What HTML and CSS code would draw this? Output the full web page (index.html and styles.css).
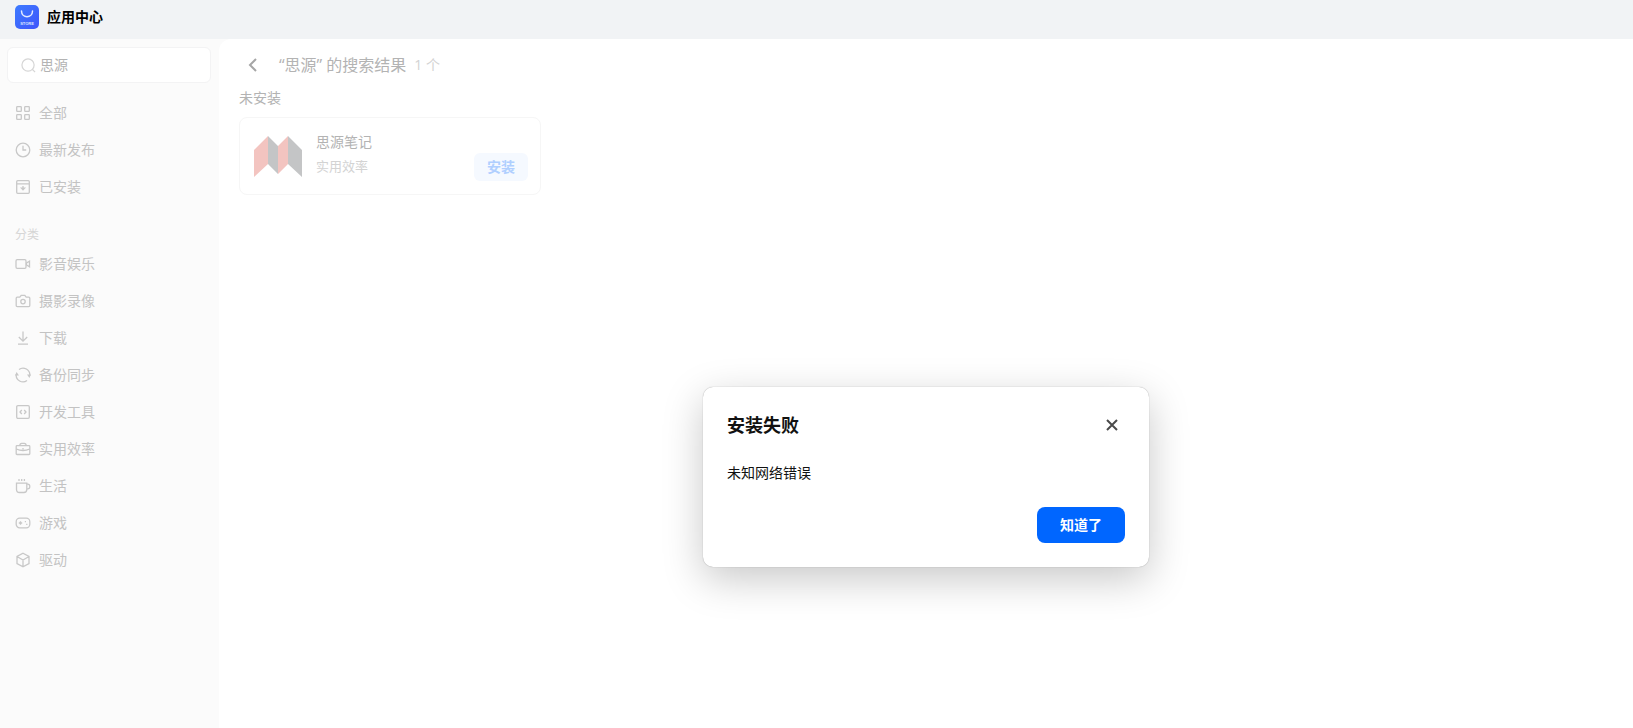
FILE: index.html
```
<!DOCTYPE html>
<html lang="zh-CN">
<head>
    <meta charset="UTF-8">
    <meta name="viewport" content="width=device-width, initial-scale=1.0">
    <title>应用中心</title>
    <link rel="stylesheet" href="styles.css">
</head>
<body>
    <header class="topbar">
        <svg class="logo" viewBox="0 0 24 24">
            <defs>
                <linearGradient id="logo-bg" x1="0" y1="0" x2="1" y2="1">
                    <stop offset="0" stop-color="#3d7bff"/>
                    <stop offset="1" stop-color="#3f55fb"/>
                </linearGradient>
            </defs>
            <rect width="24" height="24" rx="5" fill="url(#logo-bg)"/>
            <path d="M6.5 6c0 7.5 11 7.5 11 0" fill="none" stroke="#e4eaff" stroke-width="1.5" stroke-linecap="round"/>
            <text x="12" y="19.6" text-anchor="middle" class="logo-text">STORE</text>
        </svg>
        <h1>应用中心</h1>
    </header>

    <div class="layout">
        <aside class="sidebar">
            <label class="search">
                <svg class="search-icon" viewBox="0 0 16 16"><circle cx="7.5" cy="7.5" r="6.5"/><path d="M12 12l3 3"/></svg>
                <input type="text" value="思源" aria-label="搜索">
            </label>

            <nav class="menu">
                <a href="#"><svg viewBox="0 0 16 16"><rect x="1.7" y="1.7" width="4.6" height="4.6" rx="0.6"/><rect x="9.7" y="1.7" width="4.6" height="4.6" rx="0.6"/><rect x="1.7" y="9.7" width="4.6" height="4.6" rx="0.6"/><rect x="9.7" y="9.7" width="4.6" height="4.6" rx="0.6"/></svg>全部</a>
                <a href="#"><svg viewBox="0 0 16 16"><circle cx="8" cy="8" r="6.8"/><path d="M8 3.8V8h3.2"/></svg>最新发布</a>
                <a href="#"><svg viewBox="0 0 16 16"><rect x="1.7" y="1.7" width="12.6" height="12.6" rx="1"/><path d="M1.7 4.8h12.6M8 7v3"/><path class="solid" d="M5 8.6h6L8 11.800z"/></svg>已安装</a>
            </nav>

            <h2 class="menu-title">分类</h2>
            <nav class="menu">
                <a href="#"><svg viewBox="0 0 16 16"><rect x="1" y="3.7" width="10" height="8.6" rx="1.2"/><path d="M11.500 7l3-1.800v5.600l-3-1.800z"/></svg>影音娱乐</a>
                <a href="#"><svg viewBox="0 0 16 16"><path d="M2.2 4.2h2.6l1.4-1.8h3.6l1.4 1.8h2.6q1 0 1 1v7.4q0 1-1 1H2.2q-1 0-1-1V5.2q0-1 1-1z"/><circle cx="8" cy="8.6" r="2.2"/></svg>摄影录像</a>
                <a href="#"><svg viewBox="0 0 16 16"><path d="M8 1.5V11M3.8 7L8 11.200 12.200 7M3 14.200h10"/></svg>下载</a>
                <a href="#"><svg viewBox="0 0 16 16"><path d="M4 2.500A6.800 6.800 0 0 1 14.800 8.600M12 13.500A6.800 6.800 0 0 1 1.200 7.400"/><path class="solid" d="M12 7.600h4l-1.600 3.400zM0 8.400h4L1.600 5z"/></svg>备份同步</a>
                <a href="#"><svg viewBox="0 0 16 16"><rect x="1.7" y="1.7" width="12.6" height="12.6" rx="1.2"/><path d="M6.8 6L5 8l1.8 2M9.2 6L11 8l-1.800 2"/></svg>开发工具</a>
                <a href="#"><svg viewBox="0 0 16 16"><rect x="1.2" y="4.7" width="13.6" height="8.8" rx="0.8"/><path d="M4.8 4.7q0-2.300 2-2.300h2.400q2 0 2 2.300M1.200 8q6.800 3 13.600 0M8 7v1.500"/></svg>实用效率</a>
                <a href="#"><svg viewBox="0 0 16 16"><path d="M1.5 5.2h10.300v6.300q0 3-3 3H4.500q-3 0-3-3zM11.800 6.200h1q2 0 2 2.300t-2 2.300h-1M4 1v2M6.700 1v2M9.400 1v2"/></svg>生活</a>
                <a href="#"><svg viewBox="0 0 16 16"><rect x="1.2" y="3.2" width="13.6" height="9.6" rx="3.5"/><path d="M3.800 8h3.400M5.500 6.300v3.400M9.800 6.600h1.200M11.200 9.400h1.200"/></svg>游戏</a>
                <a href="#"><svg viewBox="0 0 16 16"><path d="M8 1.200l6 3.300v7L8 14.800l-6-3.300v-7zM2 4.500l6 3.500 6-3.500M8 8v6.800"/></svg>驱动</a>
            </nav>
        </aside>

        <main class="content">
            <div class="result-head">
                <button class="back" type="button" aria-label="返回">
                    <svg viewBox="0 0 16 16"><path d="M11 2L5 8l6 6"/></svg>
                </button>
                <h2>“思源” 的搜索结果</h2>
                <span class="count">1 个</span>
            </div>

            <h3 class="group-title">未安装</h3>
            <div class="app-card">
                <svg class="app-icon" viewBox="0 0 48 42">
                    <path fill="#f3c4c0" d="M0 14L14 0v28L0 41zM24 10L34 0v28L24 38z"/>
                    <path fill="#c4c5c6" d="M14 0l10 10v28L14 28zM34 0l14 14v27L34 28z"/>
                </svg>
                <div class="app-info">
                    <div class="app-name">思源笔记</div>
                    <div class="app-type">实用效率</div>
                </div>
                <button class="install" type="button">安装</button>
            </div>
        </main>

        <div class="overlay">
            <div class="dialog" role="dialog" aria-labelledby="dialog-title">
                <div class="dialog-head">
                    <h2 id="dialog-title">安装失败</h2>
                    <button class="close" type="button" aria-label="关闭">
                        <svg viewBox="0 0 12 12"><path d="M1 1l10 10M11 1L1 11"/></svg>
                    </button>
                </div>
                <p>未知网络错误</p>
                <button class="confirm" type="button">知道了</button>
            </div>
        </div>
    </div>
</body>
</html>
```
FILE: styles.css
```
* {
    box-sizing: border-box;
}

html, body {
    height: 100%;
    margin: 0;
}

body {
    display: flex;
    flex-direction: column;
    overflow: hidden;
    background: #f1f3f5;
    color: #b3b3b3;
    font-family: "Open Sans", "Noto Sans CJK SC", sans-serif;
    font-size: 14px;
    line-height: 20px;
}

h1, h2, h3, p {
    margin: 0;
    font-weight: 400;
}

button, input {
    font: inherit;
}

button {
    border: none;
    padding: 0;
    cursor: pointer;
}

svg {
    flex: none;
    fill: none;
    stroke-width: 1.3;
}

/* top bar */
.topbar {
    display: flex;
    align-items: center;
    gap: 8px;
    height: 39px;
    padding: 0 15px 5px;
}

.topbar h1 {
    color: #000;
    font-size: 14px;
    font-weight: 700;
}

.logo {
    width: 24px;
    height: 24px;
}

.logo-text {
    fill: #dfe6ff;
    font: bold 4px "Liberation Sans", sans-serif;
}

.layout {
    position: relative;
    display: flex;
    flex: 1;
    min-height: 0;
    background: #fbfbfb;
}

/* sidebar */
.sidebar {
    flex: none;
    width: 219px;
    padding: 8px 8px 8px 7px;
}

.search {
    display: flex;
    align-items: center;
    gap: 4px;
    height: 36px;
    margin-bottom: 11px;
    padding: 0 13px;
    border: 1px solid #f3f3f4;
    border-radius: 6px;
    background: #fff;
}

.search-icon {
    width: 15px;
    height: 15px;
    stroke: #d6d6d6;
}

.search input {
    width: 100%;
    border: none;
    outline: none;
    padding: 0;
    background: none;
    color: #b3b3b3;
}

.menu a {
    display: flex;
    align-items: center;
    gap: 8px;
    height: 37px;
    padding: 0 8px;
    color: #c3c3c3;
    text-decoration: none;
}

.menu svg {
    width: 16px;
    height: 16px;
    stroke: #c8c8c8;
}

.menu .solid {
    fill: #c8c8c8;
    stroke: none;
}

.menu-title {
    margin-top: 20px;
    padding: 0 8px;
    color: #d6d6d6;
    font-size: 12px;
}

/* search results */
.content {
    flex: 1;
    padding: 12px 20px;
    border-top-left-radius: 12px;
    background: #fff;
}

.result-head {
    display: flex;
    align-items: center;
    height: 28px;
}

.back {
    display: flex;
    margin: 0 18px 0 6px;
    background: none;
}

.back svg {
    width: 16px;
    height: 16px;
    stroke: #a6a6a6;
    stroke-width: 2;
}

.result-head h2 {
    font-size: 16px;
}

.count {
    margin-left: 8px;
    color: #d3d3d3;
}

.group-title {
    margin: 9px 0;
    font-size: 14px;
}

.app-card {
    display: flex;
    width: 302px;
    height: 78px;
    padding: 14px 12px 13px 14px;
    border: 1px solid #f6f6f6;
    border-radius: 8px;
}

.app-icon {
    width: 48px;
    height: 42px;
    margin: 4px 14px 0 0;
}

.app-info {
    flex: 1;
}

.app-type {
    margin-top: 4px;
    color: #d3d3d3;
    font-size: 13px;
}

.install {
    align-self: flex-end;
    width: 54px;
    height: 28px;
    border-radius: 6px;
    background: #f5f9ff;
    color: #b0cfff;
    font-weight: 700;
}

/* dialog */
.overlay {
    position: absolute;
    top: 0;
    right: 0;
    bottom: 0;
    left: 219px;
    display: flex;
    justify-content: center;
    align-items: flex-start;
    padding-top: 348px;
}

.dialog {
    display: flex;
    flex-direction: column;
    width: 446px;
    padding: 24px;
    border-radius: 10px;
    background: #fff;
    color: #111;
    box-shadow: 0 0 1px rgba(0, 0, 0, 0.4), 0 12px 40px rgba(0, 0, 0, 0.22);
}

.dialog-head {
    display: flex;
    justify-content: space-between;
    align-items: center;
    height: 28px;
}

.dialog-head h2 {
    font-size: 18px;
    font-weight: 700;
}

.close {
    display: flex;
    padding: 7px;
    background: none;
}

.close svg {
    width: 12px;
    height: 12px;
    stroke: #4a4a4a;
    stroke-width: 2;
}

.dialog p {
    margin: 24px 0;
}

.confirm {
    align-self: flex-end;
    width: 88px;
    height: 36px;
    border-radius: 8px;
    background: #0066ff;
    color: #fff;
    font-weight: 700;
}
```
